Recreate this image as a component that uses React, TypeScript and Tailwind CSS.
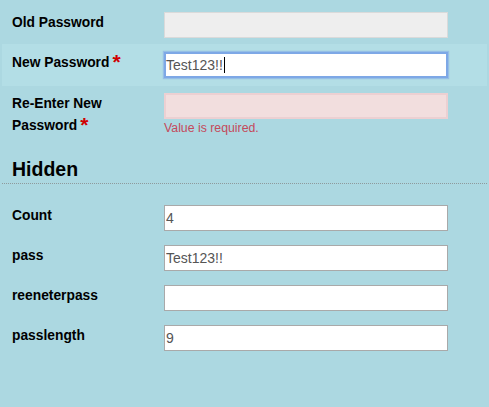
import React from 'react';

const hiddenFields = [
  { label: 'Count', value: '4' },
  { label: 'pass', value: 'Test123!!' },
  { label: 'reeneterpass', value: '' },
  { label: 'passlength', value: '9' },
];

function Req() {
  return <span className="ml-[3px] inline-block align-top text-[21px] leading-[20px] font-bold text-[#d00000]">*</span>;
}

export default function App() {
  return (
    <div className="min-h-[407px] w-full bg-[#acd8e1] px-[2px] pt-[12px] font-['Liberation_Sans',Arial,sans-serif] text-black">
      <div className="flex items-start pl-[10px]">
        <div className="w-[152px] text-[13.8px] leading-[22px] font-bold">Old Password</div>
        <input
          readOnly
          disabled
          value=""
          className="h-[26px] w-[284px] border border-[#dadada] bg-[#eeeeee] px-[1px] text-[14px] text-[#555]"
        />
      </div>

      <div className="mt-[6px] flex items-start bg-[#b3dee6] py-[8px] pl-[10px]">
        <div className="w-[152px] text-[13.8px] leading-[22px] font-bold">
          New Password
          <Req />
        </div>
        <div className="flex h-[26px] w-[284px] items-center border-2 border-[#7ea8e6] bg-white text-[14px] text-[#555] shadow-[0_0_1px_1px_rgba(120,160,230,0.5)]">
          Test123!!
          <span className="ml-[1px] h-[16px] w-[1px] bg-black" />
        </div>
      </div>

      <div className="mt-[7px] flex items-start pl-[10px]">
        <div className="w-[152px] pr-[10px] text-[13.8px] leading-[22px] font-bold">
          Re-Enter New Password
          <Req />
        </div>
        <div className="flex flex-col">
          <input
            readOnly
            value=""
            className="h-[26px] w-[284px] border-2 border-[#ecd0d2] bg-[#f2dede] px-[1px] text-[14px] text-[#555] outline-none"
          />
          <div className="mt-[2px] text-[12.3px] leading-[14px] text-[#c44a5c]">Value is required.</div>
        </div>
      </div>

      <div className="mt-[20px] border-b border-dotted border-[#8f9a9c] pb-[2px] pl-[10px] text-[19.5px] leading-[24px] font-bold">
        Hidden
      </div>

      <div className="mt-[21px] flex flex-col gap-[14px] pl-[10px]">
        {hiddenFields.map((f) => (
          <div key={f.label} className="flex items-start">
            <div className="w-[152px] text-[13.8px] leading-[22px] font-bold">{f.label}</div>
            <input
              readOnly
              value={f.value}
              className="h-[26px] w-[284px] border border-[#a9a9a9] bg-white px-[1px] text-[14px] text-[#555] outline-none"
            />
          </div>
        ))}
      </div>
    </div>
  );
}
